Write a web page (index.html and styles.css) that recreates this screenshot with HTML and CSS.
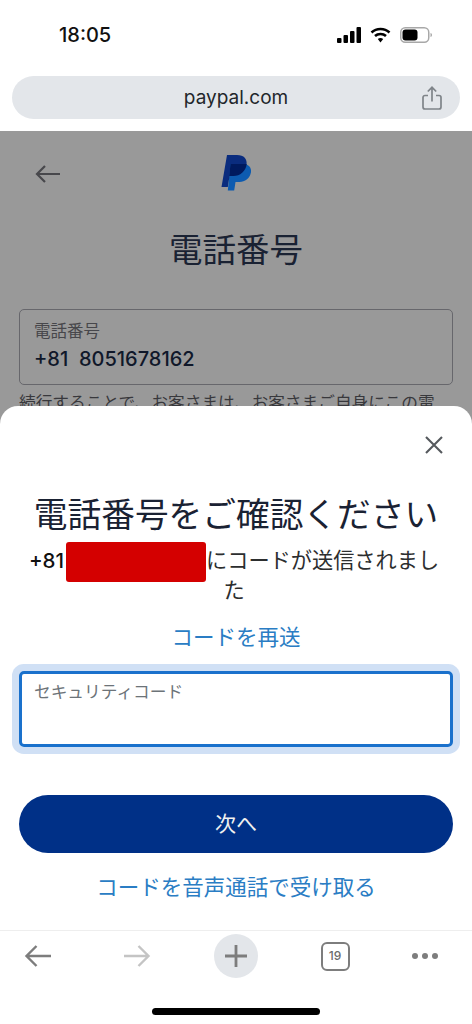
FILE: index.html
```html
<!DOCTYPE html>
<html lang="ja">
<head>
    <meta charset="UTF-8">
    <title>電話番号</title>
    <link rel="stylesheet" href="styles.css">
</head>
<body>
<div class="screen">
    <div class="status">
        <span class="time">18:05</span>
        <div class="status-icons">
            <svg width="24" height="16" viewBox="0 0 24 16"><rect x="0" y="11" width="4.5" height="5" rx="1"/><rect x="6.5" y="8" width="4.5" height="8" rx="1"/><rect x="13" y="4" width="4.5" height="12" rx="1"/><rect x="19.5" y="0" width="4.5" height="16" rx="1"/></svg>
            <svg width="21" height="16" viewBox="0 0 21 16"><path d="M1.5 5.5C6.5 .8 14.5 .8 19.5 5.5" fill="none" stroke="#000" stroke-width="2.6"/><path d="M5 9C8 6.300 13 6.300 16 9" fill="none" stroke="#000" stroke-width="2.6"/><path d="M7.800 12L10.500 15.500 13.200 12C11.600 10.700 9.400 10.700 7.800 12Z"/></svg>
            <svg width="32" height="16" viewBox="0 0 32 16"><rect x=".75" y=".75" width="28" height="14.500" rx="4.500" fill="none" stroke="#a8a8a8" stroke-width="1.500"/><rect x="2.500" y="2.500" width="15" height="11" rx="3"/><path d="M30.500 6v4c1-.4 1.500-1.200 1.500-2s-.5-1.600-1.500-2Z" fill="#a8a8a8"/></svg>
        </div>
    </div>
    <div class="urlwrap">
        <div class="urlbar">
            <span class="url">paypal.com</span>
            <svg class="share" width="20" height="24" viewBox="0 0 20 24" fill="none" stroke="#7f8489" stroke-width="1.700"><path d="M6 9.500H3a2 2 0 0 0-2 2V21a2 2 0 0 0 2 2h14a2 2 0 0 0 2-2v-9.500a2 2 0 0 0-2-2h-3"/><path d="M10 15.500V1.500M5.800 5.500L10 1.300l4.200 4.200"/></svg>
        </div>
    </div>

    <div class="page">
        <div class="behind">
            <div class="topnav">
                <svg class="nav-back" width="26" height="20" viewBox="0 0 26 20" fill="none" stroke="#48484c" stroke-width="2.200"><path d="M25 10H2M10 2l-8 8 8 8"/></svg>
                <svg width="30" height="36" viewBox="0 0 30 36">
                    <path d="M6 0H16C23 0 26.500 4 25.500 10C24.400 17 19 21 12.500 21H8.500L6.800 32H0.500Z" fill="#0a2c7e"/>
                    <path d="M9.500 9H22C28 9 31 13 29.800 18C28.600 23.500 24 27 18.500 27H14.500L13.200 35.500H6.800Z" fill="#0d5bb0"/>
                    <path d="M9.500 9H25.700C24.800 16.500 19 21 12.500 21H8.500L7.500 27.500Z" fill="#001a5e"/>
                </svg>
                <span></span>
            </div>
            <h1 class="title">電話番号</h1>
            <div class="field">
                <div class="field-label">電話番号</div>
                <div class="field-value">+81&nbsp; 8051678162</div>
            </div>
            <p class="note">続行することで、お客さまは、お客さまご自身にこの電</p>
        </div>

        <div class="sheet">
            <div class="close">
                <svg width="18" height="18" viewBox="0 0 18 18" stroke="#55595d" stroke-width="2.100"><path d="M1 1l16 16M17 1L1 17"/></svg>
            </div>
            <h2 class="sheet-title">電話番号をご確認ください</h2>
            <p class="sent"><span class="prefix">+81</span> <span class="redact"></span>にコードが送信されまし<br>た</p>
            <a class="link resend">コードを再送</a>
            <div class="codebox">セキュリティコード</div>
            <div class="next">次へ</div>
            <a class="link voice">コードを音声通話で受け取る</a>
        </div>
    </div>

    <div class="toolbar">
        <div class="tools">
            <div class="tool">
                <svg width="28" height="24" viewBox="0 0 28 24" fill="none" stroke="#7d7d7d" stroke-width="2.400"><path d="M27 12H2.500M12.500 2l-10 10 10 10"/></svg>
            </div>
            <div class="tool">
                <svg width="28" height="24" viewBox="0 0 28 24" fill="none" stroke="#c4c4c4" stroke-width="2.400"><path d="M1 12h24.500M15.500 2l10 10-10 10"/></svg>
            </div>
            <div class="tool plus">
                <svg width="22" height="22" viewBox="0 0 22 22" stroke="#7d7d7d" stroke-width="2.800"><path d="M11 0v22M0 11h22"/></svg>
            </div>
            <div class="tool"><span class="tabcount">19</span></div>
            <div class="tool more">
                <svg width="28" height="8" viewBox="0 0 28 8" fill="#7d7d7d"><circle cx="4" cy="4" r="3"/><circle cx="14" cy="4" r="3"/><circle cx="24" cy="4" r="3"/></svg>
            </div>
        </div>
        <div class="home"></div>
    </div>
</div>
</body>
</html>
```

FILE: styles.css
```css
*{
    margin: 0;
    padding: 0;
    box-sizing: border-box;
}
body{
    background: #fff;
    font-family: Inter, "Noto Sans CJK JP", sans-serif;
    color: #1a2233;
}
.screen{
    width: 472px;
    height: 1024px;
    display: flex;
    flex-direction: column;
    overflow: hidden;
}
.status{
    height: 76px;
    padding: 0 40px 6px 59px;
    display: flex;
    align-items: center;
    justify-content: space-between;
}
.time{
    font-size: 20px;
    font-weight: 500;
    color: #111;
}
.status-icons{
    display: flex;
    align-items: center;
    gap: 9px;
}
.urlwrap{
    padding: 0 12px 12px;
}
.urlbar{
    height: 43px;
    border-radius: 22px;
    background: #e3e6ea;
    display: grid;
    grid-template-columns: 1fr auto 1fr;
    align-items: center;
}
.url{
    grid-column: 2;
    font-size: 19px;
    color: #22262b;
}
.share{
    grid-column: 3;
    justify-self: end;
    margin-right: 18px;
}
.page{
    flex: 1;
    display: flex;
    flex-direction: column;
    background: #999;
}
.behind{
    height: 275px;
    overflow: hidden;
    padding: 24px 19px 0;
}
.topnav{
    display: grid;
    grid-template-columns: 1fr auto 1fr;
    align-items: center;
    height: 36px;
}
.nav-back{
    margin: 2px 0 0 16px;
}
.title{
    margin-top: 35px;
    font-size: 33.500px;
    line-height: 48px;
    font-weight: 400;
    text-align: center;
}
.field{
    margin-top: 35px;
    height: 76px;
    border: 1px solid #67676c;
    border-radius: 5px;
    padding: 9px 14px;
}
.field-label{
    font-size: 16.500px;
    line-height: 24px;
    color: #47474b;
}
.field-value{
    font-size: 20px;
    font-weight: 500;
    line-height: 32px;
    color: #10182a;
}
.note{
    margin-top: 4px;
    font-size: 16.700px;
    line-height: 28px;
    white-space: nowrap;
    color: #38383c;
}
.sheet{
    flex: 1;
    background: #fff;
    border-radius: 18px 18px 0 0;
    padding: 30px 19px 0;
    display: flex;
    flex-direction: column;
    align-items: stretch;
    text-align: center;
}
.close{
    display: flex;
    justify-content: flex-end;
    padding-right: 10px;
    height: 17px;
}
.sheet-title{
    margin-top: 38px;
    font-size: 33.700px;
    line-height: 48px;
    font-weight: 400;
    white-space: nowrap;
}
.sent{
    margin-top: 7px;
    padding-right: 4px;
    font-size: 21.200px;
    line-height: 29px;
    color: #2c2e2f;
}
.prefix{
    font-size: 20.500px;
    font-weight: 500;
    color: #111;
}
.redact{
    display: inline-block;
    width: 140px;
    height: 40px;
    margin: -6px 0 -6px -4px;
    vertical-align: middle;
    border-radius: 3px;
    background: #d40000;
}
.link{
    display: block;
    font-size: 21.500px;
    line-height: 30px;
    color: #2a7dc4;
}
.resend{
    margin-top: 17px;
}
.codebox{
    margin-top: 19px;
    height: 76px;
    border: 3px solid #1a71cc;
    border-radius: 5px;
    box-shadow: 0 0 0 7px #d0e0f5;
    padding: 6px 12px;
    text-align: left;
    font-size: 16.700px;
    line-height: 24px;
    color: #6c7378;
}
.next{
    margin-top: 48px;
    height: 58px;
    border-radius: 29px;
    background: #003087;
    color: #f0f0f0;
    font-size: 21px;
    line-height: 58px;
}
.voice{
    margin-top: 19px;
}
.toolbar{
    height: 94px;
    border-top: 1px solid #eee;
    background: #fff;
    padding-top: 3px;
}
.tools{
    display: flex;
    gap: 55px;
    padding-left: 16px;
}
.tool{
    flex: none;
    width: 44px;
    height: 44px;
    display: flex;
    align-items: center;
    justify-content: center;
}
.plus{
    border-radius: 50%;
    background: #e3e6ea;
}
.tabcount{
    width: 29px;
    height: 29px;
    border: 2.500px solid #7d7d7d;
    border-radius: 6px;
    font-size: 12px;
    line-height: 24px;
    font-weight: 500;
    text-align: center;
    color: #6a6a6a;
}
.more{
    margin-left: -9px;
}
.home{
    width: 168px;
    height: 7px;
    margin: 30px auto 0;
    border-radius: 4px;
    background: #000;
}
```
